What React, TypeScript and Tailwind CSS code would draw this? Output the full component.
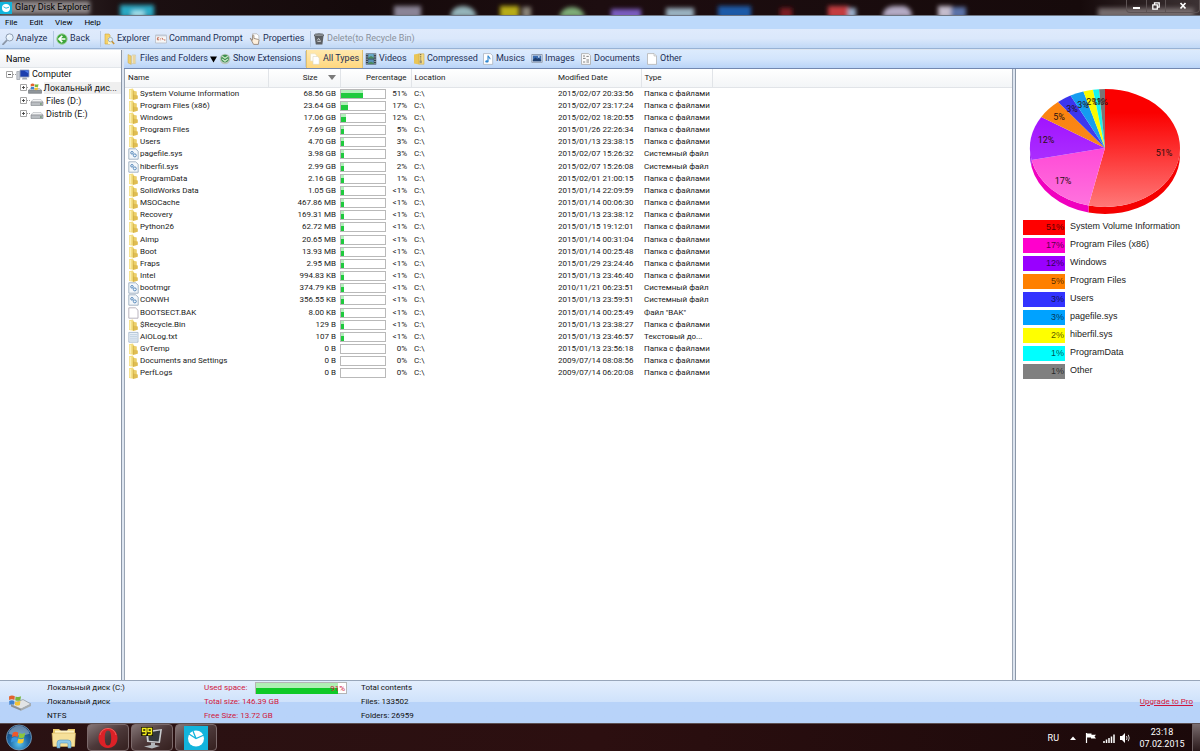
import React from "react";

const tahoma = "font-[Roboto,'Noto_Sans',sans-serif]";
const segoe = "font-[Roboto,'Open_Sans',sans-serif]";
const arial = "font-['Liberation_Sans',Arial,sans-serif]";

type Kind = "folder" | "sys" | "blank" | "text";

interface Entry {
  name: string;
  kind: Kind;
  size: string;
  pct: string;
  fill: number;
  date: string;
  type: string;
}

const FOLDER = "Папка с файлами";
const SYSTEM = "Системный файл";

const entries: Entry[] = [
  { name: "System Volume Information", kind: "folder", size: "68.56 GB", pct: "51%", fill: 51, date: "2015/02/07 20:33:56", type: FOLDER },
  { name: "Program Files (x86)", kind: "folder", size: "23.64 GB", pct: "17%", fill: 17, date: "2015/02/07 23:17:24", type: FOLDER },
  { name: "Windows", kind: "folder", size: "17.06 GB", pct: "12%", fill: 12, date: "2015/02/02 18:20:55", type: FOLDER },
  { name: "Program Files", kind: "folder", size: "7.69 GB", pct: "5%", fill: 7, date: "2015/01/26 22:26:34", type: FOLDER },
  { name: "Users", kind: "folder", size: "4.70 GB", pct: "3%", fill: 7, date: "2015/01/13 23:38:15", type: FOLDER },
  { name: "pagefile.sys", kind: "sys", size: "3.98 GB", pct: "3%", fill: 7, date: "2015/02/07 15:26:32", type: SYSTEM },
  { name: "hiberfil.sys", kind: "sys", size: "2.99 GB", pct: "2%", fill: 7, date: "2015/02/07 15:26:08", type: SYSTEM },
  { name: "ProgramData", kind: "folder", size: "2.16 GB", pct: "1%", fill: 7, date: "2015/02/01 21:00:15", type: FOLDER },
  { name: "SolidWorks Data", kind: "folder", size: "1.05 GB", pct: "<1%", fill: 7, date: "2015/01/14 22:09:59", type: FOLDER },
  { name: "MSOCache", kind: "folder", size: "467.86 MB", pct: "<1%", fill: 7, date: "2015/01/14 00:06:30", type: FOLDER },
  { name: "Recovery", kind: "folder", size: "169.31 MB", pct: "<1%", fill: 7, date: "2015/01/13 23:38:12", type: FOLDER },
  { name: "Python26", kind: "folder", size: "62.72 MB", pct: "<1%", fill: 7, date: "2015/01/15 19:12:01", type: FOLDER },
  { name: "Aimp", kind: "folder", size: "20.65 MB", pct: "<1%", fill: 7, date: "2015/01/14 00:31:04", type: FOLDER },
  { name: "Boot", kind: "folder", size: "13.93 MB", pct: "<1%", fill: 7, date: "2015/01/14 00:25:48", type: FOLDER },
  { name: "Fraps", kind: "folder", size: "2.95 MB", pct: "<1%", fill: 7, date: "2015/01/29 23:24:46", type: FOLDER },
  { name: "Intel", kind: "folder", size: "994.83 KB", pct: "<1%", fill: 7, date: "2015/01/13 23:46:40", type: FOLDER },
  { name: "bootmgr", kind: "sys", size: "374.79 KB", pct: "<1%", fill: 7, date: "2010/11/21 06:23:51", type: SYSTEM },
  { name: "CONWH", kind: "sys", size: "356.55 KB", pct: "<1%", fill: 7, date: "2015/01/13 23:59:51", type: SYSTEM },
  { name: "BOOTSECT.BAK", kind: "blank", size: "8.00 KB", pct: "<1%", fill: 7, date: "2015/01/14 00:25:49", type: 'Файл "BAK"' },
  { name: "$Recycle.Bin", kind: "folder", size: "129 B", pct: "<1%", fill: 7, date: "2015/01/13 23:38:27", type: FOLDER },
  { name: "AiOLog.txt", kind: "text", size: "107 B", pct: "<1%", fill: 7, date: "2015/01/13 23:46:57", type: "Текстовый до..." },
  { name: "GvTemp", kind: "folder", size: "0 B", pct: "0%", fill: 0, date: "2015/01/13 23:56:18", type: FOLDER },
  { name: "Documents and Settings", kind: "folder", size: "0 B", pct: "0%", fill: 0, date: "2009/07/14 08:08:56", type: FOLDER },
  { name: "PerfLogs", kind: "folder", size: "0 B", pct: "0%", fill: 0, date: "2009/07/14 06:20:08", type: FOLDER },
];

interface Slice {
  label: string;
  pct: string;
  end: number;
  chip: string;
  color: string;
  light: string;
  side: string;
  tx: number;
  ty: number;
}

const slices: Slice[] = [
  { label: "System Volume Information", pct: "51%", end: 192.7, chip: "bg-[#ff0000]", color: "#fb0000", light: "#ff7878", side: "#f50000", tx: 148, ty: 83 },
  { label: "Program Files (x86)", pct: "17%", end: 258.3, chip: "bg-[#ff00cc]", color: "#ff2fd2", light: "#ff74de", side: "#f000bf", tx: 47, ty: 111 },
  { label: "Windows", pct: "12%", end: 301.8, chip: "bg-[#9900ff]", color: "#a010ff", light: "#b54cff", side: "#9000e8", tx: 30, ty: 70 },
  { label: "Program Files", pct: "5%", end: 321.2, chip: "bg-[#ff8000]", color: "#fb8410", light: "#f58e2e", side: "#e07000", tx: 43, ty: 47 },
  { label: "Users", pct: "3%", end: 332.6, chip: "bg-[#3333ff]", color: "#3b35ee", light: "#4f49f4", side: "#2a2ad0", tx: 56, ty: 39 },
  { label: "pagefile.sys", pct: "3%", end: 343.3, chip: "bg-[#00a2ff]", color: "#149cf0", light: "#2aa8f4", side: "#0080d0", tx: 67, ty: 35 },
  { label: "hiberfil.sys", pct: "2%", end: 350.8, chip: "bg-[#ffff00]", color: "#fbfb00", light: "#ffff30", side: "#d0d000", tx: 76, ty: 32 },
  { label: "ProgramData", pct: "1%", end: 355.5, chip: "bg-[#00ffff]", color: "#14f4ee", light: "#50f0f0", side: "#00d0d0", tx: 82, ty: 32 },
  { label: "Other", pct: "1%", end: 360, chip: "bg-[#808080]", color: "#7c7474", light: "#8a8484", side: "#606060", tx: 86, ty: 32 },
];

const CX = 89;
const CY = 79;
const RX = 75;
const RY = 59;
const DEPTH = 7;

function point(angle: number) {
  const a = (angle * Math.PI) / 180;
  return { x: CX + RX * Math.sin(a), y: CY - RY * Math.cos(a) };
}

function wedge(from: number, to: number) {
  const a = point(from);
  const b = point(to);
  return `M${CX} ${CY}L${a.x} ${a.y}A${RX} ${RY} 0 ${to - from > 180 ? 1 : 0} 1 ${b.x} ${b.y}Z`;
}

function rim(from: number, to: number) {
  const a = point(Math.max(from, 90));
  const b = point(Math.min(to, 270));
  return `M${a.x} ${a.y}A${RX} ${RY} 0 0 1 ${b.x} ${b.y}v${DEPTH}A${RX} ${RY} 0 0 0 ${a.x} ${a.y + DEPTH}Z`;
}

function PieChart() {
  const starts = slices.map((_, i) => (i === 0 ? 0 : slices[i - 1].end));
  return (
    <svg viewBox="0 0 178 149" className={`block h-[149px] w-[178px] ${tahoma}`} role="img" aria-label="Disk usage">
      <defs>
        {slices.map((s, i) => (
          <linearGradient key={i} id={`slice${i}`} gradientUnits="userSpaceOnUse" x1="0" y1={CY - RY} x2="0" y2={CY + RY}>
            <stop offset="0" stopColor={s.color} />
            <stop offset="0.2" stopColor={s.color} />
            <stop offset="1" stopColor={s.light} />
          </linearGradient>
        ))}
      </defs>
      {slices.map((s, i) => (starts[i] < 270 && s.end > 90 ? <path key={i} d={rim(starts[i], s.end)} fill={s.side} /> : null))}
      {slices.map((s, i) => (
        <path key={i} d={wedge(starts[i], s.end)} fill={`url(#slice${i})`} />
      ))}
      {slices.map((s, i) => (
        <text key={i} x={s.tx} y={s.ty + 4} textAnchor="middle" fontSize="9" fill="#2a1010">
          {s.pct}
        </text>
      ))}
    </svg>
  );
}

const box = "block h-3 w-3 shrink-0";

const SearchIcon = () => (
  <svg viewBox="0 0 12 12" className={box}>
    <path d="M1 11.3 4.8 7.4" stroke="#8c97a8" strokeWidth="1.8" strokeLinecap="round" />
    <circle cx="7.6" cy="4.4" r="3.6" fill="#e8f3fd" stroke="#8f9db2" />
    <path d="M5.6 4.2a2.2 2.2 0 0 1 2-1.8" stroke="#fff" fill="none" />
  </svg>
);
const BackIcon = () => (
  <svg viewBox="0 0 12 12" className={box}>
    <circle cx="6" cy="6" r="5.2" fill="#3da53b" stroke="#9bd098" />
    <path d="M6.3 2.8 3 6l3.3 3.2M3.4 6H9.4" fill="none" stroke="#fff" strokeWidth="1.7" />
  </svg>
);
const ExplorerIcon = () => (
  <svg viewBox="0 0 12 12" className={box}>
    <path d="M2 1h4l1 1.2V11H2z" fill="#f5d36a" stroke="#d0a53a" strokeWidth=".6" />
    <path d="M5 4.5h3.5V11H5z" fill="#fdf2bf" />
    <circle cx="7.4" cy="6.6" r="2.2" fill="#dff0fb" stroke="#94a4b0" strokeWidth=".8" />
    <path d="m8.8 8.2 2.4 2.8" stroke="#c69436" strokeWidth="1.5" />
  </svg>
);
const PromptIcon = () => (
  <svg viewBox="0 0 12 12" className={box}>
    <path d="M.5 2h11v8H.5z" fill="#f6f6f6" stroke="#b6bcc6" strokeWidth=".8" />
    <path d="M.5 2h11v1.3H.5z" fill="#c3cad6" />
    <path d="M4.2 4.8H2.4v2h1.8M5.6 5v.6M5.6 6.6v.6M7 4.8l1.2 2.2M9 7h1.4" fill="none" stroke="#c06048" strokeWidth=".9" />
  </svg>
);
const PropertiesIcon = () => (
  <svg viewBox="0 0 12 12" className={box}>
    <path d="M3.5.8h4.4l2 2V8H3.5z" fill="#fff" stroke="#b4b4b4" strokeWidth=".8" />
    <path d="m1.2 5.2 2.4 2V2.8c0-1 1.3-1 1.3 0v2.6l4.2 1c.8.2.9.8.8 1.4L9.3 11.4H4.6z" fill="#fff0dc" stroke="#8a7a6c" strokeWidth=".8" />
  </svg>
);
const TrashIcon = () => (
  <svg viewBox="0 0 12 12" className={box}>
    <path d="M1.4 2.2h9.2L9.4 11.4H2.8z" fill="#5d6064" />
    <ellipse cx="6" cy="2.2" rx="4.8" ry="1.5" fill="#8c9094" stroke="#44474b" strokeWidth=".7" />
    <path d="m4.2 7.4 1.4-2 1.6 2.2M7.8 8.4H4.4" fill="none" stroke="#d5d8da" strokeWidth=".9" />
  </svg>
);
const PagesIcon = () => (
  <svg viewBox="0 0 12 12" className={box}>
    <path d="M2 1.5 5.2 3v8.4L2 9.8z" fill="#efd06e" stroke="#cba64c" strokeWidth=".5" />
    <path d="M6 2h3.6v8.6H6z" fill="#fbf6e0" stroke="#c8bf9c" strokeWidth=".6" />
    <path d="M8 2.4v8" stroke="#d9b45a" />
  </svg>
);
const ExtensionsIcon = () => (
  <svg viewBox="0 0 12 12" className={box}>
    <circle cx="6" cy="6" r="5.3" fill="#b9c6bd" />
    <circle cx="6" cy="5.6" r="3.8" fill="#3f9150" />
    <path d="m3.2 3.2 2.8 2 2.8-2M3.2 6l2.8 2.2L8.8 6" fill="none" stroke="#cfeccb" strokeWidth="1.1" />
  </svg>
);
const AllTypesIcon = () => (
  <svg viewBox="0 0 12 12" className={box}>
    <path d="M1.5.8h4.6l1.4 1.4V8h-6z" fill="#fffef8" stroke="#e6dfc4" strokeWidth=".6" />
    <path d="M4 3.5h4.6L10.2 5v6.3H4z" fill="#fff" stroke="#dcd6bf" strokeWidth=".6" />
  </svg>
);
const VideoIcon = () => (
  <svg viewBox="0 0 12 12" className={box}>
    <path d="M.8.5h10.4v11H.8z" fill="#2d3a47" />
    <path d="M3.2 1h5.6v4.4H3.2z" fill="#69a9c8" />
    <path d="M3.2 6.4h5.6V11H3.2z" fill="#5b93ba" />
    <path d="M2 1v10M10 1v10" stroke="#dfe8ee" strokeDasharray="1.2 1.1" />
    <path d="M3.2 4.4 6 3l2.8 1.4v1H3.2zM3.2 10 6 8.8 8.8 10v1H3.2z" fill="#4b8a5c" />
  </svg>
);
const ZipIcon = () => (
  <svg viewBox="0 0 12 12" className={box}>
    <path d="M1 1.4 6 .4v11.2L1 10.4z" fill="#e9c557" />
    <path d="M6 .8h5v10.4H6z" fill="#f4dc87" stroke="#c9a03a" strokeWidth=".5" />
    <path d="M7.6 1v8" stroke="#7e7452" strokeWidth="1.4" strokeDasharray="1 .8" />
    <path d="M6.6 7.6h2.2v2.6H6.6z" fill="#9a9076" />
  </svg>
);
const MusicIcon = () => (
  <svg viewBox="0 0 12 12" className={box}>
    <path d="M1.5.6h7l2.2 2.2v8.6H1.5z" fill="#fff" stroke="#a9b3bf" strokeWidth=".8" />
    <path d="M6 2.4v5.8M6 2.6c.4 1.6 2.2 1.6 2 3.6" fill="none" stroke="#2e86cf" strokeWidth="1.1" />
    <ellipse cx="4.9" cy="8.4" rx="1.6" ry="1.2" fill="#2e86cf" />
  </svg>
);
const ImageIcon = () => (
  <svg viewBox="0 0 12 12" className={box}>
    <path d="M.8 1.5h10.4v7.8H.8z" fill="#f5f7fa" stroke="#7d8ba0" strokeWidth=".8" />
    <path d="M1.8 2.5h8.4v5.8H1.8z" fill="#3b6db0" />
    <path d="m1.8 7 2.6-2.6L6.4 6l1.4-1 2.4 2v1.3H1.8z" fill="#20406f" />
    <circle cx="7.8" cy="3.8" r=".9" fill="#d5e6f8" />
  </svg>
);
const DocumentIcon = () => (
  <svg viewBox="0 0 12 12" className={box}>
    <path d="M1.5.6h7l2 2v8.8h-9z" fill="#fbfbfb" stroke="#a8a8a8" strokeWidth=".8" />
    <path d="M3 3h2M6.4 3.4h2.4M3 5.4h2.6M6.4 7h2.6M3 9h2.2M6.4 9h2.6" stroke="#777" strokeWidth=".9" />
  </svg>
);
const BlankIcon = () => (
  <svg viewBox="0 0 12 12" className={box}>
    <path d="M1.5.6h6.6l2.4 2.4v8.4h-9z" fill="#fff" stroke="#b3b3b3" strokeWidth=".8" />
    <path d="M8 .8V3h2.3" fill="#eee" stroke="#b3b3b3" strokeWidth=".6" />
  </svg>
);

function FileIcon({ kind }: { kind: Kind }) {
  return (
    <svg viewBox="0 0 11 12" className="block h-3 w-[11px] shrink-0">
      {kind === "folder" && (
        <>
          <path d="M1 1.2 5 .5 5.600 2v9.700L1 11z" fill="#f3dc7c" />
          <path d="M5 2.600 8.800 3.600V11L5 11.700z" fill="#ecd06a" />
          <path d="M5 6.500 9.800 7.500v3.300L5 11.700z" fill="#dfbd52" />
          <path d="M1.600 2 3.200 1.700v9L1.600 10.500z" fill="#fbf0b4" />
          <path d="M5.300 2.500v9" stroke="#c9a640" strokeWidth=".6" />
        </>
      )}
      {kind === "sys" && (
        <>
          <path d="M.8.8h6.8l2.6 2.4v8H.8z" fill="#f3f7fb" stroke="#8fa3b8" strokeWidth=".8" />
          <circle cx="4" cy="4.8" r="1.3" fill="none" stroke="#4a7fb4" strokeWidth=".9" />
          <circle cx="6.8" cy="7.4" r="1.5" fill="none" stroke="#4a7fb4" strokeWidth=".9" />
        </>
      )}
      {kind === "blank" && <path d="M.8.8h6.6l2.6 2.4v8H.8z" fill="#fff" stroke="#a8a2ae" strokeWidth=".8" />}
      {kind === "text" && (
        <>
          <path d="M.8 1.4h9.2v9.8H.8z" fill="#e8f0f8" stroke="#9fb2c6" strokeWidth=".8" />
          <path d="M2 3.6h7M2 5.4h7M2 7.2h7M2 9h7" stroke="#b6c9dc" strokeWidth=".8" />
        </>
      )}
    </svg>
  );
}

function ComputerIcon() {
  return (
    <svg viewBox="0 0 14 12" className="block h-3 w-[14px] shrink-0">
      <path d="M.8 2.5h3v8h-3z" fill="#c8ccd4" stroke="#8d939c" strokeWidth=".6" />
      <path d="M4 1h9v7H4z" fill="#1c3fae" stroke="#9aa6bd" strokeWidth=".8" />
      <path d="M8 1.6h4.4v3z" fill="#4d7be6" />
      <path d="M6.6 8.4h4l.8 2.2H6z" fill="#9fa7b4" />
    </svg>
  );
}

function Flag() {
  return (
    <>
      <path d="M1 3.4C3 2 5 2.2 6.8 3.2L6.4 7C4.6 6 2.8 6 1.2 7.2z" fill="#e2622e" />
      <path d="M7.600 3.400c2 .9 3.600.8 5.400-.2l-.6 4c-1.800.8-3.400.8-5.200.1z" fill="#78b63a" />
      <path d="M1.200 8c1.800-1 3.400-1 5.200 0L6 11.800C4.400 11 2.800 11 1.400 12z" fill="#3f83cf" />
      <path d="M7.200 8.300c1.800.8 3.400.7 5.200-.2l-.5 3.800c-1.800.9-3.400.8-5 .1z" fill="#f2c234" />
    </>
  );
}

function SystemDriveIcon() {
  return (
    <svg viewBox="0 0 24 18" className="block h-[18px] w-6">
      <path d="m3 11.500 12-5 8 4.500-10 5z" fill="#e2e4e6" stroke="#8b9094" strokeWidth=".7" />
      <path d="m3 11.500 10 4.500v1.700L3 13.400z" fill="#8c9195" />
      <path d="m13 16 10-5v2l-10 4.700z" fill="#a6abae" />
      <Flag />
    </svg>
  );
}

function SmallSystemDriveIcon() {
  return (
    <svg viewBox="0 0 14 12" className="block h-3 w-[14px] shrink-0">
      <path d="M2.500 6.500h9l2 1.800H.5z" fill="#e6e8ea" stroke="#8b9094" strokeWidth=".5" />
      <path d="M.5 8.300h13v3H.5z" fill="#8f969b" stroke="#6b7176" strokeWidth=".6" />
      <g transform="translate(2 0) scale(.65)">
        <Flag />
      </g>
    </svg>
  );
}

function DriveIcon() {
  return (
    <svg viewBox="0 0 14 12" className="block h-3 w-[14px] shrink-0">
      <path d="M3 4.500h8l2 2.500H1z" fill="#f1f2f3" stroke="#a5a9ad" strokeWidth=".5" />
      <path d="M1 7h12v3.500H1z" fill="#b9bdc1" stroke="#7c8186" strokeWidth=".6" />
      <path d="M10 9h1.800" stroke="#4a8a4c" />
    </svg>
  );
}

function Expander({ open }: { open?: boolean }) {
  return (
    <svg viewBox="0 0 7 7" className="block h-[7px] w-[7px] shrink-0">
      <path d="M.5.5h6v6h-6z" fill="#fff" stroke="#a5a5a5" />
      <path d={open ? "M2 3.500h3" : "M2 3.500h3M3.500 2v3"} stroke="#444" strokeWidth=".9" />
    </svg>
  );
}

interface ToolProps {
  icon: React.ReactNode;
  label: string;
  width: string;
  active?: boolean;
  disabled?: boolean;
  menu?: boolean;
}

function Tool({ icon, label, width, active, disabled, menu }: ToolProps) {
  return (
    <button
      type="button"
      disabled={disabled}
      aria-haspopup={menu ? "menu" : undefined}
      className={`flex h-full shrink-0 items-center gap-[2px] pl-[2px] text-left whitespace-nowrap ${width} ${
        active ? "border-x border-[#e0c070] bg-linear-to-b from-[#ffe9ae] to-[#ffd77e]" : ""
      } ${disabled ? "text-[#8a919c]" : "text-[#1c2f55]"}`}
    >
      {icon}
      <span>{label}</span>
      {menu && (
        <svg viewBox="0 0 7 7" className="block h-[7px] w-[7px]">
          <path d="M0 .5h7L3.500 6.500z" fill="#000" />
        </svg>
      )}
    </button>
  );
}

const Divider = () => <span className="h-4 w-px shrink-0 bg-[#b4c8e2]" />;

function DesktopBackdrop() {
  return (
    <svg className="absolute inset-0 h-full w-full" viewBox="0 0 1200 15" preserveAspectRatio="none" aria-hidden="true">
      <defs>
        <filter id="soft" x="-20%" y="-60%" width="140%" height="220%">
          <feGaussianBlur stdDeviation="2" />
        </filter>
        <linearGradient id="dark" x1="0" x2="1" y1="0" y2="0">
          <stop offset="0" stopColor="#3a3132" />
          <stop offset=".1" stopColor="#1c1012" />
          <stop offset=".3" stopColor="#150a0b" />
          <stop offset=".5" stopColor="#1d0d10" />
          <stop offset=".9" stopColor="#160a0b" />
          <stop offset="1" stopColor="#3c3234" />
        </linearGradient>
      </defs>
      <path d="M0 0h1200v15H0z" fill="url(#dark)" />
      <g filter="url(#soft)">
        <path d="M0 1h90v13H0z" fill="#8e8889" />
        <path d="M120 5h34v12h-34z" fill="#2ba9c4" />
        <path d="M132 11h12v6h-12z" fill="#a8e6f2" />
        <path d="M394 6h27v12h-27z" fill="#8a8496" />
        <path d="M450 17q2-11 13-11t14 11z" fill="#94b4ba" />
        <path d="M500 6h19v12h-19z" fill="#b8ac18" />
        <path d="M522 7h9v11h-9z" fill="#8a8478" />
        <path d="M559 17q3-10 13-10t13 10z" fill="#7fae78" />
        <path d="M611 9h30v10h-30z" fill="#7a5cc0" />
        <path d="M666 8h28v10h-28z" fill="#9ab0bf" />
        <path d="M718 6h33v12h-33z" fill="#1c5aa8" />
        <path d="M780 8h12v10h-12z" fill="#7c1c20" />
        <path d="M828 6h21v12h-21z" fill="#c43c40" />
        <path d="M848 8h8v10h-8z" fill="#9ab0cc" />
        <path d="M882 17q2-11 12-11h10q8 2 8 11z" fill="#b4aac4" />
        <path d="M938 6h14v12h-14z" fill="#c4bccc" />
        <path d="M951 7h15v11h-15z" fill="#5a72a8" />
        <path d="M1098 8h96v10h-96z" fill="#756a6c" />
      </g>
    </svg>
  );
}

function TitleBar() {
  return (
    <header className="relative flex h-[15px] shrink-0 items-center overflow-hidden">
      <DesktopBackdrop />
      <svg viewBox="0 0 12 12" className="relative block h-3 w-3">
        <path d="M0 0h12v12H0z" fill="#12b4dc" />
        <circle cx="6" cy="6" r="4" fill="#fff" />
        <path d="m3.500 4.800 2.500 1.400 3-1" fill="none" stroke="#12b4dc" strokeWidth=".9" />
      </svg>
      <h1 className={`relative ml-[3px] text-[9px] leading-[15px] text-black ${segoe}`}>Glary Disk Explorer</h1>
      <div className="relative ml-auto flex h-[13px] self-start rounded-b-sm border border-t-0 border-[#5c5253] text-white">
        <button type="button" aria-label="Minimize" className="flex w-[20px] items-center justify-center border-r border-[#5c5253]">
          <svg viewBox="0 0 8 8" className="h-2 w-2"><path d="M0 5h7v2H0z" fill="#fff" /></svg>
        </button>
        <button type="button" aria-label="Restore" className="flex w-[19px] items-center justify-center border-r border-[#5c5253]">
          <svg viewBox="0 0 8 8" className="h-2 w-2"><path d="M2.500 2.500V.8h4.700v4.400H5.500M.8 2.800h4.500v4.400H.8z" fill="none" stroke="#fff" strokeWidth="1.300" /></svg>
        </button>
        <button type="button" aria-label="Close" className="flex w-[33px] items-center justify-center">
          <svg viewBox="0 0 8 8" className="h-2 w-2"><path d="m1.500 1 5 5.500M6.500 1l-5 5.500" stroke="#fff" strokeWidth="1.700" /></svg>
        </button>
      </div>
    </header>
  );
}

function Tree() {
  const drives = [
    { name: "Локальный дис...", system: true },
    { name: "Files (D:)", system: false },
    { name: "Distrib (E:)", system: false },
  ];
  return (
    <aside className="flex w-[122px] shrink-0 flex-col border-r border-[#8b97a8] bg-white">
      <div className="h-[18px] border-b border-[#e2e6ea] bg-linear-to-b from-white to-[#f1f3f6] pl-[6px] leading-[18px] text-black">Name</div>
      <ul className="leading-[13px] text-[#111]">
        <li>
          <div className="flex h-[13px] items-center pl-[6px]">
            <Expander open />
            <span className="w-[3px] border-t border-dotted border-[#999]" />
            <ComputerIcon />
            <span className="ml-[2px]">Computer</span>
          </div>
          <ul className="ml-[20px]">
            {drives.map((d) => (
              <li key={d.name} className="flex h-[13px] items-center">
                <Expander />
                <span className="w-[3px] border-t border-dotted border-[#999]" />
                {d.system ? <SmallSystemDriveIcon /> : <DriveIcon />}
                <span className={`ml-[2px] h-[12px] leading-[12px] whitespace-nowrap ${d.system ? "bg-[#efefef] pr-1" : ""}`}>{d.name}</span>
              </li>
            ))}
          </ul>
        </li>
      </ul>
    </aside>
  );
}

function FileTable() {
  const th = "h-[18px] border-b border-[#e1e4e8] p-0 text-left font-normal";
  return (
    <table className={`w-full table-fixed border-collapse text-[8px] leading-[12px] text-[#1a1a1a] ${tahoma}`}>
      <colgroup>
        <col className="w-[143px]" />
        <col className="w-[72px]" />
        <col className="w-[71px]" />
        <col className="w-[144px]" />
        <col className="w-[86px]" />
        <col className="w-[71px]" />
        <col />
      </colgroup>
      <thead>
        <tr className="bg-linear-to-b from-white to-[#f3f5f7]">
          <th className={`${th} border-r pl-[3px]`}>Name</th>
          <th className={`${th} border-r`}>
            <span className="flex items-center justify-end gap-[10px] pr-1">
              Size
              <svg viewBox="0 0 8 5" className="h-[5px] w-2"><path d="M0 0h8L4 5z" fill="#7a7a7a" /></svg>
            </span>
          </th>
          <th className={`${th} border-r`}><span className="block pr-[4px] text-right">Percentage</span></th>
          <th className={`${th} pl-[3px]`}>Location</th>
          <th className={`${th} border-r pl-[3px]`}>Modified Date</th>
          <th className={`${th} border-r pl-[3px]`}>Type</th>
          <th className={th} />
        </tr>
      </thead>
      <tbody>
        {entries.map((e) => (
          <tr key={e.name} className="h-[12px] nth-[6n]:h-[13px]">
            <td className="p-0">
              <span className="flex h-3 items-center gap-[1px] pl-[3px] whitespace-nowrap">
                <FileIcon kind={e.kind} />
                {e.name}
              </span>
            </td>
            <td className="p-0 pr-[4px] text-right">{e.size}</td>
            <td className="p-0 pr-[4px]">
              <span className="flex items-center justify-between">
                <span className="flex h-[10px] w-[46px] border border-[#b9b9b9] bg-white">
                  <span className="bg-linear-to-b from-[#b4f0bc] from-40% to-[#1fca3e] to-40%" style={{ width: `${e.fill}%` }} />
                </span>
                {e.pct}
              </span>
            </td>
            <td className="p-0 pl-[3px]">C:\</td>
            <td className="p-0 pl-[3px] whitespace-nowrap">{e.date}</td>
            <td className="p-0 pl-[3px] whitespace-nowrap">{e.type}</td>
            <td className="p-0" />
          </tr>
        ))}
      </tbody>
    </table>
  );
}

function UsagePanel() {
  return (
    <aside className="w-[185px] shrink-0 border-l border-[#8b97a8] bg-white">
      <PieChart />
      <ul className={`pl-[7px] text-[9px] text-[#222] ${arial}`}>
        {slices.map((s) => (
          <li key={s.label} className="flex h-[18px] items-center gap-[5px] whitespace-nowrap">
            <span className={`h-[15px] w-[42px] pr-[1px] text-right leading-[15px] text-black/70 ${s.chip}`}>{s.pct}</span>
            {s.label}
          </li>
        ))}
      </ul>
    </aside>
  );
}

function StatusBar() {
  return (
    <footer className={`flex h-[43px] shrink-0 items-center border-t border-[#98a6ba] bg-linear-to-b from-[#e3eefd] from-0% via-[#cfe2fb] via-50% to-[#b8d3f9] to-50% text-[8px] leading-[14px] text-[#111] ${tahoma}`}>
      <div className="w-[47px] shrink-0 pl-[8px]">
        <SystemDriveIcon />
      </div>
      <div className="w-[157px] shrink-0">
        <p>Локальный диск (C:)</p>
        <p>Локальный диск</p>
        <p>NTFS</p>
      </div>
      <div className="w-[157px] shrink-0 text-[#d0163c]">
        <div className="flex h-[14px] items-center">
          <span className="w-[51px]">Used space:</span>
          <div className="grid h-[12px] w-[92px] border border-[#b5b5b5] bg-white">
            <span className="col-start-1 row-start-1 w-[91%] bg-linear-to-b from-[#b0efb4] from-50% to-[#0fc927] to-50%" />
            <span className="col-start-1 row-start-1 pr-[1px] text-right leading-[11px]">91%</span>
          </div>
        </div>
        <p>Total size: 146.39 GB</p>
        <p>Free Size: 13.72 GB</p>
      </div>
      <div>
        <p>Total contents</p>
        <p>Files: 133502</p>
        <p>Folders: 26959</p>
      </div>
      <a href="#upgrade" className="mr-[7px] ml-auto text-[#d0163c] underline">Upgrade to Pro</a>
    </footer>
  );
}

function TaskButton({ label, children }: { label: string; children: React.ReactNode }) {
  return (
    <button
      type="button"
      aria-label={label}
      className="flex h-[27px] w-[42px] items-center justify-center rounded-sm border border-[#7c6a6b] bg-linear-to-br from-[#857778] via-[#4c3839] to-[#35201f]"
    >
      {children}
    </button>
  );
}

function Taskbar() {
  return (
    <nav className="flex h-[28px] shrink-0 items-center border-t border-[#5c5052] bg-linear-to-r from-[#2a1213] via-[#2c0f10] to-[#1b090a] text-white">
      <button type="button" aria-label="Start" className="ml-[5px]">
        <svg viewBox="0 0 28 28" className="block h-[27px] w-[28px]">
          <defs>
            <radialGradient id="orb" cx=".5" cy=".75" r=".75">
              <stop offset="0" stopColor="#5cc4ee" />
              <stop offset=".5" stopColor="#1f6aa8" />
              <stop offset="1" stopColor="#123c6c" />
            </radialGradient>
          </defs>
          <circle cx="14" cy="14" r="13" fill="url(#orb)" stroke="#7fa6c4" strokeWidth=".8" />
          <path d="M3 10a11.500 11.500 0 0 1 22 0q-11 4-22 0z" fill="#fff" opacity=".35" />
          <path d="M7.500 9.200c2-1.400 3.900-1.300 5.900-.2l-.9 4.500c-1.900-1-3.800-1-5.900.2z" fill="#f0572a" />
          <path d="M14.400 9.400c2 1 4 1 6-.2l-.9 4.600c-2 1.200-4 1.200-6 .2z" fill="#8cc63c" />
          <path d="M6.400 14.700c2-1.200 3.900-1.200 5.900-.2l-.9 4.500c-1.900-1-3.800-1-5.800.2z" fill="#3a97e0" />
          <path d="M13.300 15c2 1 4 .9 6-.2l-.9 4.500c-2 1.200-4 1.200-6 .2z" fill="#fbc92c" />
        </svg>
      </button>
      <button type="button" aria-label="Explorer" className="ml-[18px] w-[36px]">
        <svg viewBox="0 0 26 24" className="block h-6 w-[26px]">
          <path d="M2 3h6l2 2h6l1-2h7v17H2z" fill="#e8c868" />
          <path d="M4 4.500h19v13H4z" fill="#fff3c4" />
          <path d="M1 7h23.500l-1 13.500H2z" fill="#f6e09a" stroke="#d3b057" strokeWidth=".6" />
          <path d="M6 22v-5q0-3 3-3h8q3 0 3 3v5h-3v-4q0-1-1-1h-6q-1 0-1 1v4z" fill="#8cc8e8" stroke="#5595bc" strokeWidth=".6" />
        </svg>
      </button>
      <div className="flex gap-[2px]">
        <TaskButton label="Opera">
          <svg viewBox="0 0 22 24" className="h-6 w-[22px]">
            <path fillRule="evenodd" d="M11 2c5.500 0 9.500 4.300 9.500 10S16.500 22 11 22 1.500 17.700 1.500 12 5.500 2 11 2zm0 2.500C8.500 4.500 7.800 8 7.800 12s.7 7.500 3.200 7.500 3.200-3.500 3.200-7.500-.7-7.500-3.200-7.500z" fill="#dc2127" />
            <path d="M3 9c1-4 4-6.500 8-6.500S18 5 19 9" fill="none" stroke="#f47a70" strokeWidth="1" opacity=".7" />
          </svg>
        </TaskButton>
        <TaskButton label="Fraps">
          <svg viewBox="0 0 26 24" className="h-6 w-[26px]">
            <path d="m7 5 16-2-2 14-13-1z" fill="#c9cccf" />
            <path d="m9 6.500 12.200-2-1.600 11-9.800-.7z" fill="#33373c" />
            <path d="m12 16.500 4 .3v2.200l5 1-8 2.500-8-2 7-1.500z" fill="#b3b7bb" />
            <path d="M2 1h12v9H2z" fill="#1c1a08" />
            <path d="M7 8.500V2.500H3.500v3H7M3.500 8.500H7M12.500 8.500V2.500H9v3h3.500M9 8.500h3.500" fill="none" stroke="#f6ef1e" strokeWidth="1.400" />
          </svg>
        </TaskButton>
        <TaskButton label="Glary Disk Explorer">
          <svg viewBox="0 0 24 24" className="h-6 w-6">
            <path d="M0 0h24v24H0z" fill="#12b4dc" />
            <circle cx="12" cy="12.500" r="8" fill="#fff" />
            <path d="m5 8 7 4.500L20 9M12 12.500 9 5" fill="none" stroke="#12b4dc" strokeWidth="1.300" />
          </svg>
        </TaskButton>
      </div>
      <div className={`ml-auto flex h-full items-center text-[9px] leading-[12px] ${segoe}`}>
        <span className="mr-[11px]">RU</span>
        <button type="button" aria-label="Show hidden icons" className="mr-[9px]">
          <svg viewBox="0 0 6 4" className="block h-1 w-[6px]"><path d="M0 4h6L3 .5z" fill="#fff" /></svg>
        </button>
        <svg viewBox="0 0 12 12" className="mr-[6px] block h-3 w-3">
          <path d="M1.500 1v10" stroke="#fff" strokeWidth="1.200" />
          <path d="M2 1.500h4.500v1.200H11L9.500 4.500l1.500 2H6v-1H2z" fill="#fff" />
        </svg>
        <svg viewBox="0 0 12 12" className="mr-[5px] block h-3 w-3">
          <path d="M1 9v2M3.500 7.500V11M6 6v5M8.500 4.500V11M11 2.500V11" stroke="#fff" strokeWidth="1.500" />
        </svg>
        <svg viewBox="0 0 12 12" className="block h-3 w-3">
          <path d="M0 4h2l3-3v10L2 8H0z" fill="#fff" />
          <path d="M6.500 4q1 2 0 4M8.300 2.800q1.800 3.200 0 6.400" fill="none" stroke="#fff" strokeWidth=".8" />
        </svg>
        <time className="w-[60px] text-center">
          23:18
          <br />
          07.02.2015
        </time>
        <button type="button" aria-label="Show desktop" className="h-full w-[8px] border-l border-[#6d6062] bg-linear-to-b from-[#7b6e70] to-[#2a1a1b]" />
      </div>
    </nav>
  );
}

export default function App() {
  return (
    <div className="flex h-screen flex-col overflow-hidden bg-[#c5dbf8]">
      <TitleBar />
      <div className={`flex min-h-0 flex-1 flex-col text-[9px] ${segoe}`}>
        <nav className="flex h-[14px] shrink-0 items-center gap-[12px] border-t border-[#6e7683] bg-[#bdd9fb] pl-[5px] text-[8px] leading-[13px] text-black">
          <button type="button">File</button>
          <button type="button">Edit</button>
          <button type="button">View</button>
          <button type="button">Help</button>
        </nav>
        <div className="flex h-[20px] shrink-0 items-center border-b border-[#98b2d4] bg-linear-to-b from-[#dfeafc] via-[#dbe8fb] to-[#c0d8f6] pt-px">
          <Tool icon={<SearchIcon />} label="Analyze" width="w-[53px]" />
          <Divider />
          <Tool icon={<BackIcon />} label="Back" width="w-[46px]" />
          <Divider />
          <Tool icon={<ExplorerIcon />} label="Explorer" width="w-[52px]" />
          <Tool icon={<PromptIcon />} label="Command Prompt" width="w-[94px]" />
          <Tool icon={<PropertiesIcon />} label="Properties" width="w-[63px]" />
          <Divider />
          <Tool icon={<TrashIcon />} label="Delete(to Recycle Bin)" width="w-[102px]" disabled />
        </div>
        <main className="flex min-h-0 flex-1 gap-[2px] bg-[#dde5f0] pt-px">
          <Tree />
          <section className="flex min-w-0 flex-1 flex-col">
            <div className="flex h-[19px] shrink-0 items-center border-b border-[#7288b0] bg-linear-to-b from-[#dcebfd] via-[#d3e5fc] to-[#b9d4f8]">
              <Tool icon={<PagesIcon />} label="Files and Folders" width="w-[93px]" menu />
              <Tool icon={<ExtensionsIcon />} label="Show Extensions" width="w-[88px]" />
              <Divider />
              <Tool icon={<AllTypesIcon />} label="All Types" width="w-[57px]" active />
              <Tool icon={<VideoIcon />} label="Videos" width="w-[48px]" />
              <Tool icon={<ZipIcon />} label="Compressed" width="w-[69px]" />
              <Tool icon={<MusicIcon />} label="Musics" width="w-[49px]" />
              <Tool icon={<ImageIcon />} label="Images" width="w-[49px]" />
              <Tool icon={<DocumentIcon />} label="Documents" width="w-[66px]" />
              <Tool icon={<BlankIcon />} label="Other" width="w-[50px]" />
            </div>
            <div className="flex min-h-0 flex-1 gap-[2px]">
              <div className="min-w-0 flex-1 border-x border-[#9aa5b4] bg-white">
                <FileTable />
              </div>
              <UsagePanel />
            </div>
          </section>
        </main>
      </div>
      <StatusBar />
      <Taskbar />
    </div>
  );
}
